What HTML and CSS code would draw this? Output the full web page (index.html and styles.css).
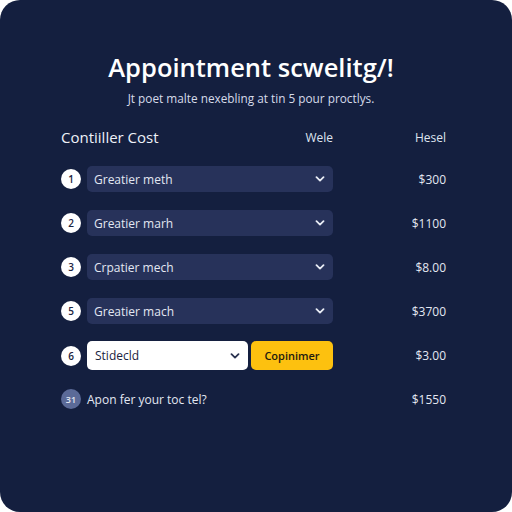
FILE: index.html
```html
<!DOCTYPE html>
<html lang="en">
<head>
    <meta charset="UTF-8">
    <meta name="viewport" content="width=device-width, initial-scale=1.0">
    <title>Appointment Scheduling</title>
    <link rel="stylesheet" href="styles.css">
</head>
<body>
    <div class="panel">
        <div class="header">
            <h1>Appointment scwelitg/!</h1>
            <p>Jt poet malte nexebling at tin 5 pour proctlys.</p>
        </div>
        <div class="table">
            <div class="table-head">
                <span class="col-title">Contiiller Cost</span>
                <span class="col-mid">Wele</span>
                <span class="col-price">Hesel</span>
            </div>

            <div class="row">
                <span class="step">1</span>
                <div class="select">
                    <span>Greatier meth</span>
                    <svg class="chevron" viewBox="0 0 10 6"><path d="M1.5 1.2 5 4.6 8.5 1.2"/></svg>
                </div>
                <span class="price">$300</span>
            </div>
            <div class="row">
                <span class="step">2</span>
                <div class="select">
                    <span>Greatier marh</span>
                    <svg class="chevron" viewBox="0 0 10 6"><path d="M1.5 1.2 5 4.6 8.5 1.2"/></svg>
                </div>
                <span class="price">$1100</span>
            </div>
            <div class="row">
                <span class="step">3</span>
                <div class="select">
                    <span>Crpatier mech</span>
                    <svg class="chevron" viewBox="0 0 10 6"><path d="M1.5 1.2 5 4.6 8.5 1.2"/></svg>
                </div>
                <span class="price">$8.00</span>
            </div>
            <div class="row">
                <span class="step">5</span>
                <div class="select">
                    <span>Greatier mach</span>
                    <svg class="chevron" viewBox="0 0 10 6"><path d="M1.5 1.2 5 4.6 8.5 1.2"/></svg>
                </div>
                <span class="price">$3700</span>
            </div>
            <div class="row">
                <span class="step">6</span>
                <div class="select-group">
                    <div class="select light">
                        <span>Stidecld</span>
                        <svg class="chevron" viewBox="0 0 10 6"><path d="M1.5 1.2 5 4.6 8.5 1.2"/></svg>
                    </div>
                    <button class="confirm">Copinimer</button>
                </div>
                <span class="price">$3.00</span>
            </div>

            <div class="row footer">
                <span class="step muted">31</span>
                <span class="question">Apon fer your toc tel?</span>
                <span class="price">$1550</span>
            </div>
        </div>
    </div>
</body>
</html>
```

FILE: styles.css
```css
body {
    margin: 0;
    padding: 0;
    background-color: #ffffff;
    font-family: 'Open Sans', 'Noto Sans', sans-serif;
    color: #e8ecf6;
}
.panel {
    height: 512px;
    box-sizing: border-box;
    background-color: #141f3f;
    border-radius: 20px;
    padding: 49px 66px 0 61px;
}
.header {
    text-align: center;
    margin-left: -5px;
}
.header h1 {
    margin: 0;
    font-family: 'Open Sans', sans-serif;
    font-size: 25.5px;
    font-weight: 600;
    color: #ffffff;
    line-height: 36px;
}
.header p {
    margin: 5px 0 0;
    font-size: 11.8px;
    color: #d6dbea;
    line-height: 16px;
}
.table {
    margin-top: 19px;
}
/* header shares the row columns so labels line up with the fields */
.table-head,
.row {
    display: grid;
    grid-template-columns: 20px 246px 1fr;
    column-gap: 6px;
    align-items: center;
}
.table-head {
    height: 24px;
    margin-bottom: 16px;
}
.col-title {
    grid-column: 1 / 3;
    grid-row: 1;
    font-size: 15px;
    color: #eef1f8;
}
.col-mid {
    grid-column: 2;
    grid-row: 1;
    justify-self: end;
    font-size: 12px;
    color: #dfe4f0;
}
.col-price {
    grid-column: 3;
    grid-row: 1;
    text-align: right;
    font-size: 12px;
    color: #dfe4f0;
}
.row {
    height: 28px;
    margin-bottom: 16px;
}
.step {
    width: 20px;
    height: 20px;
    border-radius: 50%;
    background-color: #ffffff;
    color: #1a2340;
    font-size: 10px;
    font-weight: 600;
    display: flex;
    align-items: center;
    justify-content: center;
}
.step.muted {
    background-color: #5b6a98;
    color: #e4e8f3;
    font-size: 9px;
}
.select {
    height: 26px;
    box-sizing: border-box;
    background-color: #27325a;
    border-radius: 5px;
    padding: 0 8px 0 7px;
    display: flex;
    align-items: center;
    justify-content: space-between;
    font-size: 12px;
    color: #e3e7f2;
}
.chevron {
    width: 10px;
    height: 6px;
    fill: none;
    stroke: #e8ecf5;
    stroke-width: 1.8;
    stroke-linecap: round;
    stroke-linejoin: round;
}
.select-group {
    display: flex;
    gap: 3px;
}
.select.light {
    flex: 0 0 161px;
    height: 29px;
    background-color: #ffffff;
    color: #1a2340;
    padding-left: 8px;
}
.select.light .chevron {
    stroke: #2a3350;
}
.confirm {
    flex: 1;
    height: 29px;
    border: none;
    border-radius: 5px;
    background-color: #fdc10f;
    color: #1c1a10;
    font-family: 'Open Sans', sans-serif;
    font-size: 11px;
    font-weight: 600;
    padding: 0;
}
.price {
    text-align: right;
    font-size: 12px;
    color: #e3e7f2;
}
.row.footer {
    margin-top: 3px;
}
.question {
    font-size: 12px;
    color: #e3e7f2;
}
```
